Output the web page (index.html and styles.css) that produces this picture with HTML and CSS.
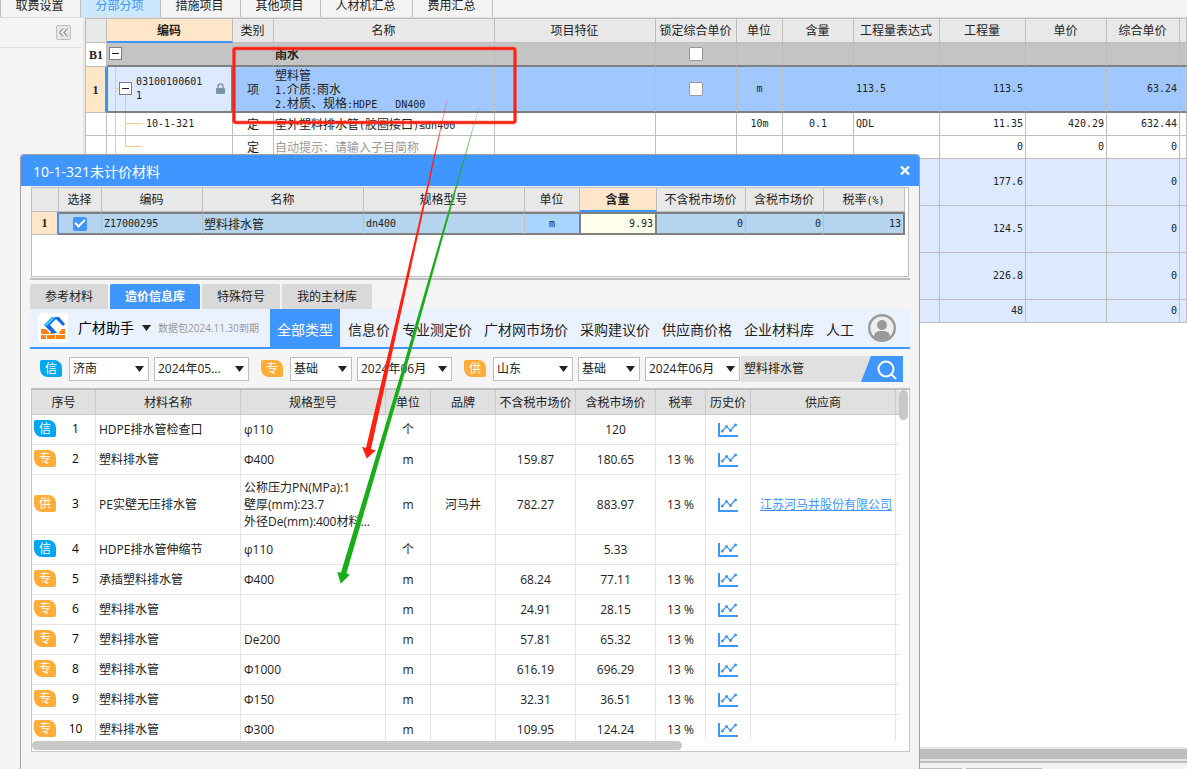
FILE: index.html
```html
<!DOCTYPE html>
<html lang="zh-CN">
<head>
<meta charset="utf-8">
<title>未计价材料</title>
<link rel="stylesheet" href="styles.css">
</head>
<body>
<svg class="defs" aria-hidden="true">
  <symbol id="chart" viewBox="0 0 20 14">
    <path d="M1 0V13H20" fill="none" stroke="#4096ff" stroke-width="2"/>
    <path d="M4 8.500L8.500 3.500L12.500 7.500L17.500 1.500" fill="none" stroke="#4096ff" stroke-width="1.200"/>
    <g fill="#4096ff"><circle cx="4.300" cy="8" r="1.500"/><circle cx="8.500" cy="3.500" r="1.500"/><circle cx="12.500" cy="7.500" r="1.500"/><circle cx="17.500" cy="2" r="1.500"/></g>
  </symbol>
  <symbol id="caret" viewBox="0 0 9 6"><path d="M0 0H9L4.500 6Z" fill="#222"/></symbol>
</svg>

<div class="app">
  <nav class="tabs">
    <button>取费设置</button><button class="on">分部分项</button><button>措施项目</button><button>其他项目</button><button class="wide">人材机汇总</button><button>费用汇总</button>
  </nav>
  <div class="work">
    <aside class="side">
      <button class="collapse" aria-label="收起"><svg width="9" height="9" viewBox="0 0 9 9"><path d="M4 0.500L0.500 4.500L4 8.500M8.500 0.500L5 4.500L8.500 8.500" fill="none" stroke="#666"/></svg></button>
    </aside>
    <main class="main">
      <div class="sheet-wrap">
      <table class="sheet">
        <colgroup><col class="w21"><col class="w126"><col class="w41"><col class="w221"><col class="w161"><col class="w81"><col class="w46"><col class="w71"><col class="w86"><col class="w86"><col class="w81"><col class="w73"><col></colgroup>
        <thead><tr><th></th><th class="cur">编码</th><th>类别</th><th>名称</th><th>项目特征</th><th>锁定综合单价</th><th>单位</th><th>含量</th><th>工程量表达式</th><th>工程量</th><th>单价</th><th>综合单价</th><th></th></tr></thead>
        <tbody>
          <tr class="group"><td class="no">B1</td><td><button class="node" aria-label="折叠"><svg width="30" height="22"><path d="M8.500 17V22" stroke="#ffc978"/><rect x="2.500" y="4.500" width="12" height="12" fill="#fff" stroke="#7f7f7f"/><path d="M5 10.500H12" stroke="#222"/></svg></button></td><td></td><td class="name"><b>雨水</b></td><td></td><td class="c"><input type="checkbox" aria-label="锁定综合单价"></td><td></td><td></td><td></td><td></td><td></td><td></td><td></td></tr>
          <tr class="sel"><td class="no">1</td><td class="code"><div class="tree"><button class="node" aria-label="折叠"><svg width="28" height="44" viewBox="1 0 28 44"><path d="M8.500 0V44M8.500 21.500H12M18.500 28V44" stroke="#ffc978" fill="none"/><rect x="12.500" y="15.500" width="12" height="12" fill="#fff" stroke="#7f7f7f"/><path d="M15 21.500H22" stroke="#222"/></svg></button><span class="n grow">03100100601<br>1</span><svg class="lock" width="9" height="12" viewBox="0 0 9 12"><path d="M2 6V3.500A2.500 2.500 0 0 1 7 3.500V6" fill="none" stroke="#7a93ad" stroke-width="1.300"/><rect y="5" width="9" height="6" rx="1" fill="#7a93ad"/></svg></div></td><td class="c">项</td><td class="name desc">塑料管<br><i>1.</i>介质<i>:</i>雨水<br><i>2.</i>材质、规格<i>:HDPE&nbsp;&nbsp; DN400</i></td><td></td><td class="c"><input type="checkbox" aria-label="锁定综合单价"></td><td class="c n">m</td><td></td><td class="n">113.5</td><td class="r n">113.5</td><td></td><td class="r n">63.24</td><td></td></tr>
          <tr><td></td><td class="code"><div class="tree"><svg width="39" height="22"><path d="M8.500 0V22M18.500 0V22M18.500 10.500H35" stroke="#ffc978" fill="none"/></svg><span class="n">10-1-321</span></div></td><td class="c">定</td><td class="name">室外塑料排水管<i>(</i>胶圈接口<i>)≤dn400</i></td><td></td><td></td><td class="c n">10m</td><td class="c n">0.1</td><td class="n">QDL</td><td class="r n">11.35</td><td class="r n">420.29</td><td class="r n">632.44</td><td></td></tr>
          <tr><td></td><td class="code"><div class="tree"><svg width="39" height="22"><path d="M8.500 0V22M18.500 0V10.500H35" stroke="#ffc978" fill="none"/></svg></div></td><td class="c">定</td><td class="name hint">自动提示：请输入子目简称</td><td></td><td></td><td></td><td></td><td></td><td class="r n">0</td><td class="r n">0</td><td class="r n">0</td><td></td></tr>
          <tr class="blue tall"><td></td><td></td><td></td><td></td><td></td><td></td><td></td><td></td><td></td><td class="r n">177.6</td><td></td><td class="r n">0</td><td></td></tr>
          <tr class="blue tall"><td></td><td></td><td></td><td></td><td></td><td></td><td></td><td></td><td></td><td class="r n">124.5</td><td></td><td class="r n">0</td><td></td></tr>
          <tr class="blue tall"><td></td><td></td><td></td><td></td><td></td><td></td><td></td><td></td><td></td><td class="r n">226.8</td><td></td><td class="r n">0</td><td></td></tr>
          <tr class="blue"><td></td><td></td><td></td><td></td><td></td><td></td><td></td><td></td><td></td><td class="r n">48</td><td></td><td class="r n">0</td><td></td></tr>
        </tbody>
      </table>
      </div>
      <div class="hbar"></div>
      <div class="foot"><span></span><span></span></div>
    </main>
  </div>

  <section class="dialog" role="dialog" aria-label="10-1-321未计价材料">
    <header class="title"><span>10-1-321未计价材料</span><button aria-label="关闭"><svg width="10" height="9" viewBox="0 0 10 9"><path d="M1 0.500L9 8.500M9 0.500L1 8.500" stroke="#fff" stroke-width="2.400"/></svg></button></header>
    <div class="panel">
      <table class="sheet mini">
        <colgroup><col class="w27"><col class="w43"><col class="w101"><col class="w161"><col class="w161"><col class="w55"><col class="w77"><col class="w89"><col class="w78"><col class="w81"></colgroup>
        <thead><tr><th></th><th>选择</th><th>编码</th><th>名称</th><th>规格型号</th><th>单位</th><th class="cur">含量</th><th>不含税市场价</th><th>含税市场价</th><th>税率<i>(%)</i></th></tr></thead>
        <tbody><tr class="pick"><td class="no">1</td><td class="c"><input type="checkbox" checked aria-label="选择"></td><td class="n">Z17000295</td><td class="name">塑料排水管</td><td class="n">dn400</td><td class="c n unit">m</td><td class="r n edit">9.93</td><td class="r n">0</td><td class="r n">0</td><td class="r n">13</td></tr></tbody>
      </table>
    </div>
    <div class="split"></div>
    <nav class="subtabs"><button>参考材料</button><button class="on">造价信息库</button><button>特殊符号</button><button>我的主材库</button></nav>
    <div class="bar">
      <svg class="logo" width="30" height="30" viewBox="0 0 30 30"><rect width="30" height="30" rx="4" fill="#fff"/><g fill="#ff8212"><path d="M3 16H8L11 19V21H3ZM3 22H8V26H3ZM9 22H17V26H9ZM18 22H27V26H18ZM12 20L14 18L17 21H12ZM18 16H27V21H22Z"/></g><path d="M17 16H24L20.500 20Z" fill="#fff"/><path d="M14 4H20L12 12L19 20H14L6 12Z" fill="#1268e8"/><path d="M14 4H18L9 13L6 12Z" fill="#39c2f5"/><path d="M18 4H21L27 11L25 13L18 6Z" fill="#1268e8"/></svg>
      <button class="brand">广材助手<svg width="9" height="6"><use href="#caret"/></svg></button>
      <span class="exp">数据包2024.11.30到期</span>
      <nav class="kinds"><a href="#" class="on">全部类型</a><a href="#">信息价</a><a href="#">专业测定价</a><a href="#">广材网市场价</a><a href="#">采购建议价</a><a href="#">供应商价格</a><a href="#">企业材料库</a><a href="#">人工</a></nav>
      <svg class="avatar" width="28" height="28" viewBox="0 0 28 28"><circle cx="14" cy="14" r="12.800" fill="#eee" stroke="#999" stroke-width="2.400"/><circle cx="14" cy="11" r="5" fill="#999"/><path d="M6 23C6 18.500 9 17 14 17S22 18.500 22 23Q18.500 26 14 26T6 23Z" fill="#999"/></svg>
    </div>
    <form class="filter">
      <span class="tag info">信</span>
      <label class="pop s80"><select aria-label="信息价地区"><option>济南</option></select><svg width="9" height="6"><use href="#caret"/></svg></label>
      <label class="pop s95"><select aria-label="信息价期数"><option>2024年05...</option></select><svg width="9" height="6"><use href="#caret"/></svg></label>
      <span class="tag lead">专</span>
      <label class="pop s62"><select aria-label="专业测定价类型"><option>基础</option></select><svg width="9" height="6"><use href="#caret"/></svg></label>
      <label class="pop s95"><select aria-label="专业测定价期数"><option>2024年06月</option></select><svg width="9" height="6"><use href="#caret"/></svg></label>
      <span class="tag lead">供</span>
      <label class="pop s80"><select aria-label="供应商地区"><option>山东</option></select><svg width="9" height="6"><use href="#caret"/></svg></label>
      <label class="pop s62"><select aria-label="供应商类型"><option>基础</option></select><svg width="9" height="6"><use href="#caret"/></svg></label>
      <label class="pop s95"><select aria-label="供应商期数"><option>2024年06月</option></select><svg width="9" height="6"><use href="#caret"/></svg></label>
      <div class="search"><input type="text" value="塑料排水管" aria-label="搜索"><button type="button" aria-label="搜索"><svg width="42" height="26" viewBox="0 0 42 26"><path d="M10 0H42V26H0Z" fill="#4096ff"/><circle cx="25" cy="13" r="7.500" fill="none" stroke="#fff" stroke-width="2"/><path d="M30.500 18.500L35 23" stroke="#fff" stroke-width="2"/></svg></button></div>
    </form>
    <div class="result">
      <div class="view">
      <table class="data">
        <colgroup><col class="w64"><col class="w145"><col class="w145"><col class="w45"><col class="w65"><col class="w80"><col class="w80"><col class="w50"><col class="w45"><col class="w145"><col></colgroup>
        <thead><tr><th>序号</th><th>材料名称</th><th>规格型号</th><th>单位</th><th>品牌</th><th>不含税市场价</th><th>含税市场价</th><th>税率</th><th>历史价</th><th>供应商</th><th></th></tr></thead>
        <tbody>
          <tr><td><div class="no"><span class="tag info">信</span><b>1</b></div></td><td>HDPE排水管检查口</td><td>φ110</td><td>个</td><td></td><td></td><td>120</td><td></td><td><svg width="20" height="14"><use href="#chart"/></svg></td><td></td><td></td></tr>
          <tr><td><div class="no"><span class="tag">专</span><b>2</b></div></td><td>塑料排水管</td><td>Φ400</td><td>m</td><td></td><td>159.87</td><td>180.65</td><td>13 %</td><td><svg width="20" height="14"><use href="#chart"/></svg></td><td></td><td></td></tr>
          <tr class="big"><td><div class="no"><span class="tag">供</span><b>3</b></div></td><td>PE实壁无压排水管</td><td>公称压力PN(MPa):1<br>壁厚(mm):23.7<br>外径De(mm):400材料...</td><td>m</td><td>河马井</td><td>782.27</td><td>883.97</td><td>13 %</td><td><svg width="20" height="14"><use href="#chart"/></svg></td><td><a href="#">江苏河马井股份有限公司</a></td><td></td></tr>
          <tr><td><div class="no"><span class="tag info">信</span><b>4</b></div></td><td>HDPE排水管伸缩节</td><td>φ110</td><td>个</td><td></td><td></td><td>5.33</td><td></td><td><svg width="20" height="14"><use href="#chart"/></svg></td><td></td><td></td></tr>
          <tr><td><div class="no"><span class="tag">专</span><b>5</b></div></td><td>承插塑料排水管</td><td>Φ400</td><td>m</td><td></td><td>68.24</td><td>77.11</td><td>13 %</td><td><svg width="20" height="14"><use href="#chart"/></svg></td><td></td><td></td></tr>
          <tr><td><div class="no"><span class="tag">专</span><b>6</b></div></td><td>塑料排水管</td><td></td><td>m</td><td></td><td>24.91</td><td>28.15</td><td>13 %</td><td><svg width="20" height="14"><use href="#chart"/></svg></td><td></td><td></td></tr>
          <tr><td><div class="no"><span class="tag">专</span><b>7</b></div></td><td>塑料排水管</td><td>De200</td><td>m</td><td></td><td>57.81</td><td>65.32</td><td>13 %</td><td><svg width="20" height="14"><use href="#chart"/></svg></td><td></td><td></td></tr>
          <tr><td><div class="no"><span class="tag">专</span><b>8</b></div></td><td>塑料排水管</td><td>Φ1000</td><td>m</td><td></td><td>616.19</td><td>696.29</td><td>13 %</td><td><svg width="20" height="14"><use href="#chart"/></svg></td><td></td><td></td></tr>
          <tr><td><div class="no"><span class="tag">专</span><b>9</b></div></td><td>塑料排水管</td><td>Φ150</td><td>m</td><td></td><td>32.31</td><td>36.51</td><td>13 %</td><td><svg width="20" height="14"><use href="#chart"/></svg></td><td></td><td></td></tr>
          <tr><td><div class="no"><span class="tag">专</span><b>10</b></div></td><td>塑料排水管</td><td>Φ300</td><td>m</td><td></td><td>109.95</td><td>124.24</td><td>13 %</td><td><svg width="20" height="14"><use href="#chart"/></svg></td><td></td><td></td></tr>
        </tbody>
      </table>
      </div>
      <div class="vscroll"></div>
      <div class="hscroll"></div>
    </div>
  </section>

  <svg class="marks" width="600" height="600" viewBox="0 0 600 600" aria-hidden="true">
    <defs>
      <linearGradient id="r" gradientUnits="userSpaceOnUse" x1="447" y1="100" x2="433" y2="165"><stop offset="0" stop-color="#ff2010" stop-opacity="0.300"/><stop offset="1" stop-color="#ff2010"/></linearGradient>
      <linearGradient id="g" gradientUnits="userSpaceOnUse" x1="479" y1="107" x2="450" y2="210"><stop offset="0" stop-color="#19ad19" stop-opacity="0.300"/><stop offset="1" stop-color="#19ad19"/></linearGradient>
    </defs>
    <rect x="234" y="48.500" width="281" height="74" rx="2" fill="none" stroke="#ff2010" stroke-opacity="0.400" stroke-width="4"/>
    <rect x="234" y="48.500" width="281" height="74" rx="2" fill="none" stroke="#ff2010" stroke-width="2.600"/>
    <path d="M446.600 100H447.400L420.500 224L371 449L375.700 450.500L366.700 458.500L362 446.700L366 448L418.500 224Z" fill="url(#r)"/>
    <path d="M478.600 107H479.400L408.500 360L346.500 573L349.700 574.700L340.700 583.700L337.300 572L341 572.500L405 360Z" fill="url(#g)"/>
  </svg>
</div>
</body>
</html>
```

FILE: styles.css
```css
* { box-sizing: border-box; }
body { margin: 0; font: 12px/16px "Open Sans", "Noto Sans CJK SC", sans-serif; color: #222; background: #f4f4f4; }
button, input, select { font: inherit; color: inherit; margin: 0; padding: 0; border: 0; background: none; }
i { font-style: normal; }
svg { display: block; flex: none; }
.defs { position: absolute; width: 0; height: 0; }
.app { position: relative; height: 100vh; overflow: hidden; display: flex; flex-direction: column; }

.tabs { display: flex; height: 18px; border-bottom: 1px solid #dcdcdc; }
.tabs button { width: 80px; height: 17px; overflow: hidden; border-left: 1px solid #bebebe; display: flex; justify-content: center; line-height: 12px; padding-right: 2px; }
.tabs .wide { width: 92px; }
.tabs button:last-child { width: 81px; border-right: 1px solid #bebebe; }
.tabs .on { background: #cce8ff; color: #4096ff; }

.work { flex: 1; min-height: 0; display: flex; }
.side { width: 85px; flex: none; border-right: 2px solid #e6e6e6; }
.side::after { content: ""; display: block; width: 81px; height: 1px; background: #dcdcdc; }
.collapse { display: grid; place-items: center; width: 15px; height: 15px; margin: 7px 0 7px 56px; border: 1px solid #bebebe; border-radius: 2px; background: #e8e8e8; }
.main { flex: 1; min-width: 0; display: flex; flex-direction: column; }
.sheet-wrap { flex: 1; min-height: 0; overflow: hidden; background: #fff; border-top: 1px solid #bebebe; border-left: 1px solid #bebebe; }
.hbar { height: 14px; background: #bebebe; border: solid #e8e8e8; border-width: 2px 0; }
.foot { height: 8px; border-top: 2px solid #bebebe; display: flex; align-items: flex-end; gap: 4px; padding-left: 801px; }
.foot span { width: 76px; height: 1px; background: #bebebe; }

.sheet { width: 100%; table-layout: fixed; border-collapse: separate; border-spacing: 0; line-height: 14px; font-family: "Noto Sans CJK SC", sans-serif; }
.sheet th { height: 24px; padding: 0 1px 1px 0; font-weight: 400; background: #e8e8e8; border: solid #bebebe; border-width: 0 1px 1px 0; white-space: nowrap; }
.sheet .cur { background: #ffe6c8; border-bottom: 2px solid #4096ff; font-weight: 700; }
.sheet td { height: 23px; padding: 0 2px; border: solid #bebebe; border-width: 0 1px 1px 0; white-space: nowrap; }
.sheet tr td:nth-child(2) { padding: 0; }
.sheet .c { text-align: center; }
.sheet .r { text-align: right; }
.sheet .n, .sheet i { font-family: "DejaVu Sans Mono", monospace; font-size: 10px; }
.sheet i { line-height: 10px; }
.sheet td.no { padding: 0; text-align: center; font-weight: 700; font-family: "Liberation Serif", serif; }
.sheet input { appearance: none; display: block; width: 14px; height: 14px; margin: auto; background: #fff; border: 1px solid #999; border-radius: 2px; }
.sheet .name { padding-left: 1px; }
.sheet .hint { color: #999; }
.sheet .group td { height: 24px; background: #c4c4c4; border-color: #bebebe; border-bottom: 2px solid #808080; }
.sheet .group td.no { background: #fff; border-bottom: 1px solid #bebebe; }
.sheet .sel td { height: 46px; background: #a0c8ff; border-bottom: 2px solid #808080; }
.sheet .sel .no { background: #ffe6c8; border-right: 2px solid #4096ff; border-bottom: 1px solid #bebebe; }
.sheet .sel .code { background: #dce9ff; border: solid #808080; border-width: 0 2px 2px 1px; }
.sheet .blue td { background: #dce9ff; }
.sheet .tall td { height: 47px; }
.tree { display: flex; align-items: center; }
.node { display: block; }
.grow { flex: 1; }
.lock { margin-right: 6px; }

.dialog { position: absolute; left: 20px; top: 154px; bottom: 0; width: 900px; display: flex; flex-direction: column; background: #f4f4f4; border: 1px solid #a0a0a0; border-bottom: 0; border-radius: 4px 4px 0 0; overflow: hidden; }
.title { height: 31px; flex: none; display: flex; align-items: center; justify-content: space-between; padding: 2px 9px 0 12px; background: #4096ff; color: #fff; font-size: 14px; }
.title button { padding-bottom: 3px; }
.panel { height: 90px; flex: none; margin: 1px 10px 0; background: #fff; border: 1px solid #bebebe; }
.mini { width: 873px; }
.mini .pick td { background: #b4d4f0; border-top: 2px solid #808080; border-bottom: 2px solid #808080; }
.mini .pick .no { background: #ffe6c8; border-top: 0; border-right: 2px solid #4096ff; border-bottom: 1px solid #bebebe; }
.mini .pick .unit { background: #a8d4ff; border-right-color: #808080; }
.mini .pick .edit { background: #ffffec; border-left: 1px solid #808080; border-right: 2px solid #808080; }
.mini td:last-child { border-right: 2px solid #808080; }
.mini input:checked { background: #4096ff; border-color: #4096ff; display: grid; place-items: center; }
.mini input:checked::before { content: ""; width: 8px; height: 4px; border: solid #fff; border-width: 0 0 2px 2px; transform: rotate(-45deg); margin-bottom: 3px; }
.split { height: 2px; flex: none; margin: 1px 9px 0; background: #bebebe; }

.subtabs { display: flex; gap: 2px; margin: 4px 9px 0; }
.subtabs button { height: 25px; padding: 0 15px; background: #d9d9d9; border-radius: 2px 2px 0 0; }
.subtabs .on { background: #4096ff; color: #fff; font-weight: 700; }

.bar { display: flex; align-items: center; height: 40px; flex: none; margin: 0 9px; padding-left: 8px; background: #ebf2ff; border-bottom: 2px solid #4096ff; font-size: 14px; white-space: nowrap; }
.brand { display: flex; align-items: center; gap: 8px; margin-left: 10px; color: #000; }
.exp { width: 104px; margin: 0 8px 0 7px; font-size: 10px; color: #999; }
.kinds { display: flex; gap: 12px; height: 38px; line-height: 42px; }
.kinds a { color: #222; text-decoration: none; }
.kinds .on { background: #4096ff; color: #fff; padding: 0 7px; margin-right: -4px; }
.avatar { margin-left: 14px; }

.filter { display: flex; align-items: center; height: 39px; flex: none; margin: 0 9px; padding-left: 10px; background: #f5f5f5; }
.tag { flex: none; width: 22px; height: 17px; line-height: 17px; text-align: center; color: #fff; background: #ffac38; border-radius: 2px 8px 2px 8px; }
.tag.info { background: #00a6f0; }
.tag.lead { margin-left: 12px; }
.pop { flex: none; display: grid; align-items: center; height: 24px; background: #fff; border: 1px solid #bebebe; }
.pop + .pop { margin-left: 5px; }
.tag + .pop { margin-left: 7px; }
.pop select, .pop svg { grid-area: 1 / 1; }
.pop select { appearance: none; width: 100%; height: 22px; padding-left: 3px; outline: 0; }
.pop svg { justify-self: end; margin-right: 4px; pointer-events: none; }
.s80 { width: 80px; } .s95 { width: 95px; } .s62 { width: 62px; }
.search { flex: 1; min-width: 0; display: flex; height: 26px; margin: 0 7px 0 1px; background: #e0e0e0; }
.search input { flex: 1; min-width: 0; padding-left: 3px; }
.search button { width: 42px; }

.result { flex: 1; min-height: 0; display: grid; grid-template: minmax(0, 1fr) 10px / minmax(0, 1fr) 10px; margin: 0 9px 17px 10px; background: #fff; border: 1px solid #c8c8c8; border-top: 2px solid #bebebe; }
.view { overflow: hidden; }
.vscroll { width: 9px; height: 30px; background: #c8c8c8; border-radius: 5px; }
.hscroll { width: 75%; height: 9px; background: #c8c8c8; border-radius: 5px; }
.data { width: 100%; table-layout: fixed; border-collapse: separate; border-spacing: 0; line-height: 17px; }
.data th { height: 25px; padding: 0; font-weight: 400; background: #e0e0e0; border: solid #c8c8c8; border-width: 0 1px 1px 0; white-space: nowrap; }
.data td { height: 30px; padding: 0; text-align: center; border: solid #e4e4e4; border-width: 0 1px 1px 0; white-space: nowrap; }
.data th:last-child, .data td:last-child { border-right: 0; }
.data td:nth-child(2), .data td:nth-child(3) { padding-left: 3px; text-align: left; }
.data .big td { height: 60px; }
.data td svg { margin: 0 auto; }
.data .no { display: flex; align-items: center; padding: 0 0 2px 2px; }
.data .no b { flex: 1; font-weight: 400; color: #000; }
.data td a { padding-left: 6px; color: #4096ff; }

.w21 { width: 21px; } .w27 { width: 27px; } .w41 { width: 41px; } .w43 { width: 43px; } .w45 { width: 45px; }
.w46 { width: 46px; } .w50 { width: 50px; } .w55 { width: 55px; } .w64 { width: 64px; } .w65 { width: 65px; }
.w71 { width: 71px; } .w73 { width: 73px; } .w77 { width: 77px; } .w78 { width: 78px; } .w80 { width: 80px; }
.w81 { width: 81px; } .w86 { width: 86px; } .w89 { width: 89px; } .w101 { width: 101px; } .w126 { width: 126px; }
.w145 { width: 145px; } .w161 { width: 161px; } .w221 { width: 221px; }

.marks { position: absolute; left: 0; top: 0; pointer-events: none; }
```
